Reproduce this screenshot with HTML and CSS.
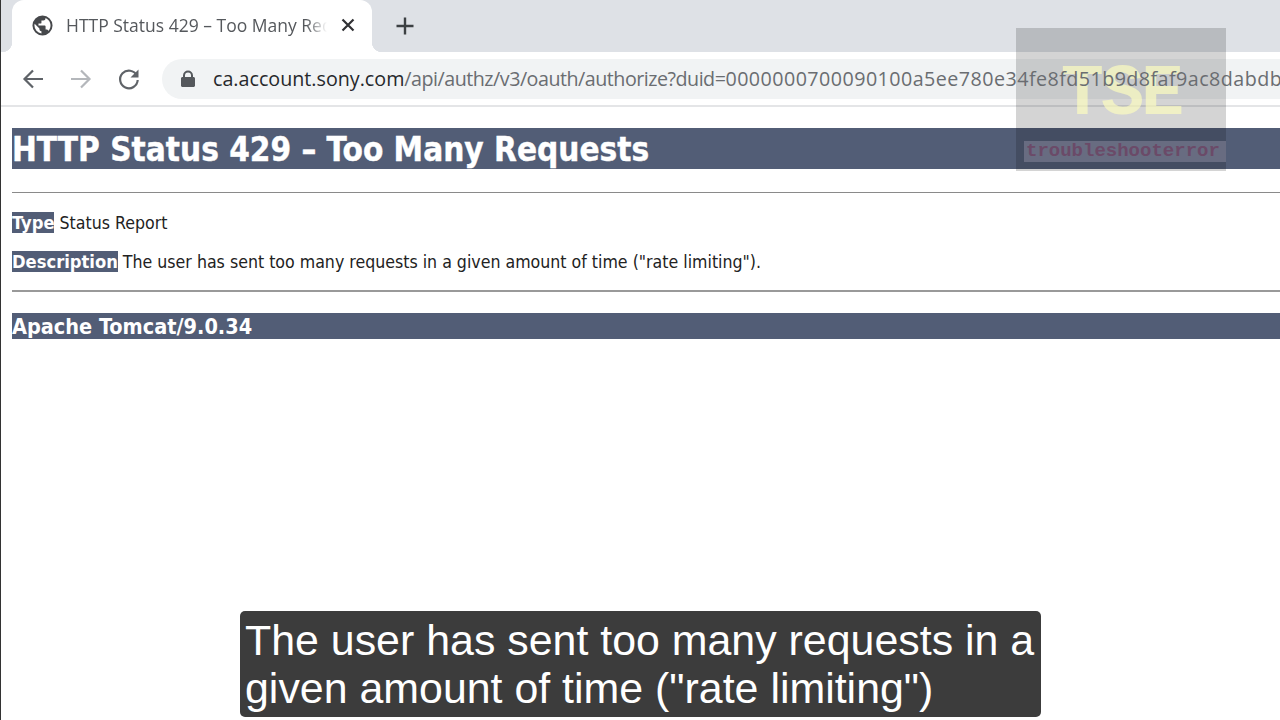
FILE: index.html
```html
<!DOCTYPE html>
<html lang="en">
<head>
  <meta charset="UTF-8">
  <title>HTTP Status 429 – Too Many Requests</title>
  <link rel="stylesheet" href="styles.css">
</head>
<body>
  <div class="tabstrip">
    <div class="tab">
      <svg class="globe" width="23" height="23" viewBox="0 0 24 24"><path fill="#46484b" d="M12 1.500a10.500 10.500 0 1 0 0 21 10.500 10.500 0 0 0 0-21zM3.600 12c0-.6.1-1.300.2-1.900L8.800 15v1c0 1.200 1 2.100 2.100 2.100v2.200A8.400 8.400 0 0 1 3.600 12zm14.600 5.700c-.3-.9-1-1.500-2-1.500h-1V13c0-.6-.5-1-1.100-1H7.800V10h2.100c.6 0 1-.5 1-1V6.800h2.100c1.200 0 2.100-.9 2.100-2.100v-.4a8.400 8.400 0 0 1 3.100 13.400z"/></svg>
      <span class="tab-title">HTTP Status 429 – Too Many Requests</span>
      <svg class="tab-close" width="14" height="14" viewBox="0 0 14 14"><path d="M1.500 1.500l11 11M12.500 1.500l-11 11" stroke="#303134" stroke-width="2.200" fill="none"/></svg>
    </div>
    <svg class="newtab" width="20" height="20" viewBox="0 0 20 20"><path d="M10 1.500v17M1.500 10h17" stroke="#3c4043" stroke-width="2.400" fill="none"/></svg>
  </div>

  <div class="toolbar">
    <svg class="nav" width="24" height="24" viewBox="0 0 24 24"><path d="M22 12H4M12 3.500L3.500 12l8.500 8.500" stroke="#5f6368" stroke-width="2.200" fill="none"/></svg>
    <svg class="nav" width="24" height="24" viewBox="0 0 24 24"><path d="M2 12h18M12 3.500l8.500 8.500-8.500 8.500" stroke="#b4b7bb" stroke-width="2.200" fill="none"/></svg>
    <svg class="nav" width="24" height="24" viewBox="0 0 24 24"><path d="M19.800 8.500A8.800 8.800 0 1 0 20.700 13" stroke="#5f6368" stroke-width="2.200" fill="none"/><path d="M21.500 2.500v8h-8z" fill="#5f6368"/></svg>
    <div class="omnibox">
      <svg class="lock" width="14" height="18" viewBox="0 0 14 18"><path fill="#55585c" d="M2 7V5.500a5 5 0 0 1 10 0V7h.5c.8 0 1.500.7 1.500 1.500v7c0 .8-.7 1.500-1.500 1.500h-11C.7 17 0 16.300 0 15.500v-7C0 7.700.7 7 1.500 7zm2 0h6V5.500a3 3 0 0 0-6 0z"/></svg>
      <span class="url"><span class="host">ca.account.sony.com</span><span class="path">/api/authz/v3/oauth/authorize?duid=</span><span class="duid">0000000700090100a5ee780e34fe8fd51b9d8faf9ac8dabdb</span></span>
    </div>
  </div>

  <div class="page">
    <h1>HTTP Status 429 – Too Many Requests</h1>
    <hr class="rule-first">
    <p class="first"><b>Type</b> Status Report</p>
    <p><b>Description</b> The user has sent too many requests in a given amount of time ("rate limiting").</p>
    <hr>
    <h3>Apache Tomcat/9.0.34</h3>
  </div>

  <div class="watermark">
    <div class="wm-big">TSE</div>
    <div class="wm-small">troubleshooterror</div>
  </div>

  <div class="caption">The user has sent too many requests in a<br>given amount of time ("rate limiting")</div>
</body>
</html>
```
FILE: styles.css
```css
html, body {
  margin: 0;
  height: 720px;
  overflow: hidden;
  background: #fff;
}
body {
  font-family: "Open Sans", sans-serif;
  color: #222;
  border-left: 1px solid #333;
  box-sizing: border-box;
}
.tabstrip {
  height: 52px;
  background: #dee1e6;
  display: flex;
  align-items: center;
  padding-left: 11px;
}
.tab {
  position: relative;
  width: 360px;
  height: 52px;
  background: #fff;
  border-radius: 12px 12px 0 0;
  display: flex;
  align-items: center;
  box-sizing: border-box;
  padding: 0 17px 2px 19px;
}
.tab::before, .tab::after {
  content: "";
  position: absolute;
  bottom: 0;
  width: 10px;
  height: 10px;
}
.tab::before {
  left: -10px;
  background: radial-gradient(circle at 0 0, transparent 10px, #fff 10.500px);
}
.tab::after {
  right: -10px;
  background: radial-gradient(circle at 100% 0, transparent 10px, #fff 10.500px);
}
.tab-title {
  flex: 1;
  margin-left: 12px;
  font-size: 17.500px;
  color: #55585c;
  white-space: nowrap;
  overflow: hidden;
  -webkit-mask-image: linear-gradient(to right, #000 92%, transparent 100%);
  mask-image: linear-gradient(to right, #000 92%, transparent 100%);
}
.tab-close {
  margin-left: 14px;
}
.newtab {
  margin-left: 23px;
}
.toolbar {
  height: 53px;
  background: #fff;
  border-bottom: 2px solid #e4e5e7;
  display: flex;
  align-items: center;
  padding-left: 20px;
  gap: 24px;
}
.omnibox {
  flex: 1;
  min-width: 0;
  height: 40px;
  margin-left: -3px;
  background: #f1f3f4;
  border-radius: 20px 0 0 20px;
  display: flex;
  align-items: center;
  padding-left: 19px;
  overflow: hidden;
}
.lock {
  flex: none;
}
.url {
  position: relative;
  z-index: 2;
  margin-left: 18px;
  font-size: 19.700px;
  color: #6a6d71;
  white-space: nowrap;
}
.host {
  color: #26282b;
}
.path {
  letter-spacing: -0.500px;
}
.duid {
  letter-spacing: 0.450px;
}
.page {
  padding: 21px 0 0 11px;
  font-family: "DejaVu Sans Condensed", "DejaVu Sans", sans-serif;
}
h1, h3 {
  margin: 0;
  background: #525d76;
  color: #fff;
  font-weight: 700;
}
h1 {
  font-size: 33px;
  line-height: 38px;
  padding-top: 3px;
  -webkit-text-stroke: 0.400px #fff;
}
h3 {
  font-size: 21.500px;
  line-height: 25px;
  padding-top: 1px;
}
hr {
  margin: 0;
  border: 0;
  height: 1px;
  background: #8a8a8a;
}
.rule-first {
  margin-top: 23px;
}
p {
  margin: 17px 0 0;
  font-size: 17.600px;
  line-height: 22px;
}
p.first {
  margin-top: 19px;
}
p b {
  background: #525d76;
  color: #fff;
  font-size: 18.200px;
}
p + hr {
  margin-top: 17px;
  height: 2px;
  background: #999;
}
hr + h3 {
  margin-top: 21px;
}
.watermark {
  position: absolute;
  left: 1016px;
  top: 28px;
  width: 210px;
  height: 143px;
  background: rgba(0, 0, 0, 0.17);
  text-align: center;
}
.wm-big {
  margin-top: 32px;
  font-family: "Liberation Mono", monospace;
  font-weight: 700;
  font-size: 72px;
  line-height: 70px;
  letter-spacing: -3px;
  color: rgba(255, 255, 190, 0.65);
}
.wm-small {
  margin: 11px 0 0 8px;
  padding-left: 2px;
  background: rgba(140, 140, 160, 0.5);
  color: #6b4a68;
  text-align: left;
  font-family: "Liberation Mono", monospace;
  font-weight: 700;
  font-size: 19px;
  line-height: 21px;
}
.caption {
  position: absolute;
  left: 240px;
  top: 611px;
  width: 801px;
  height: 106px;
  box-sizing: border-box;
  padding: 5px 0 0 5px;
  background: #3c3c3c;
  border-radius: 5px;
  color: #fff;
  font-family: "Liberation Sans", sans-serif;
  font-size: 42.900px;
  line-height: 48px;
  white-space: nowrap;
}
```
